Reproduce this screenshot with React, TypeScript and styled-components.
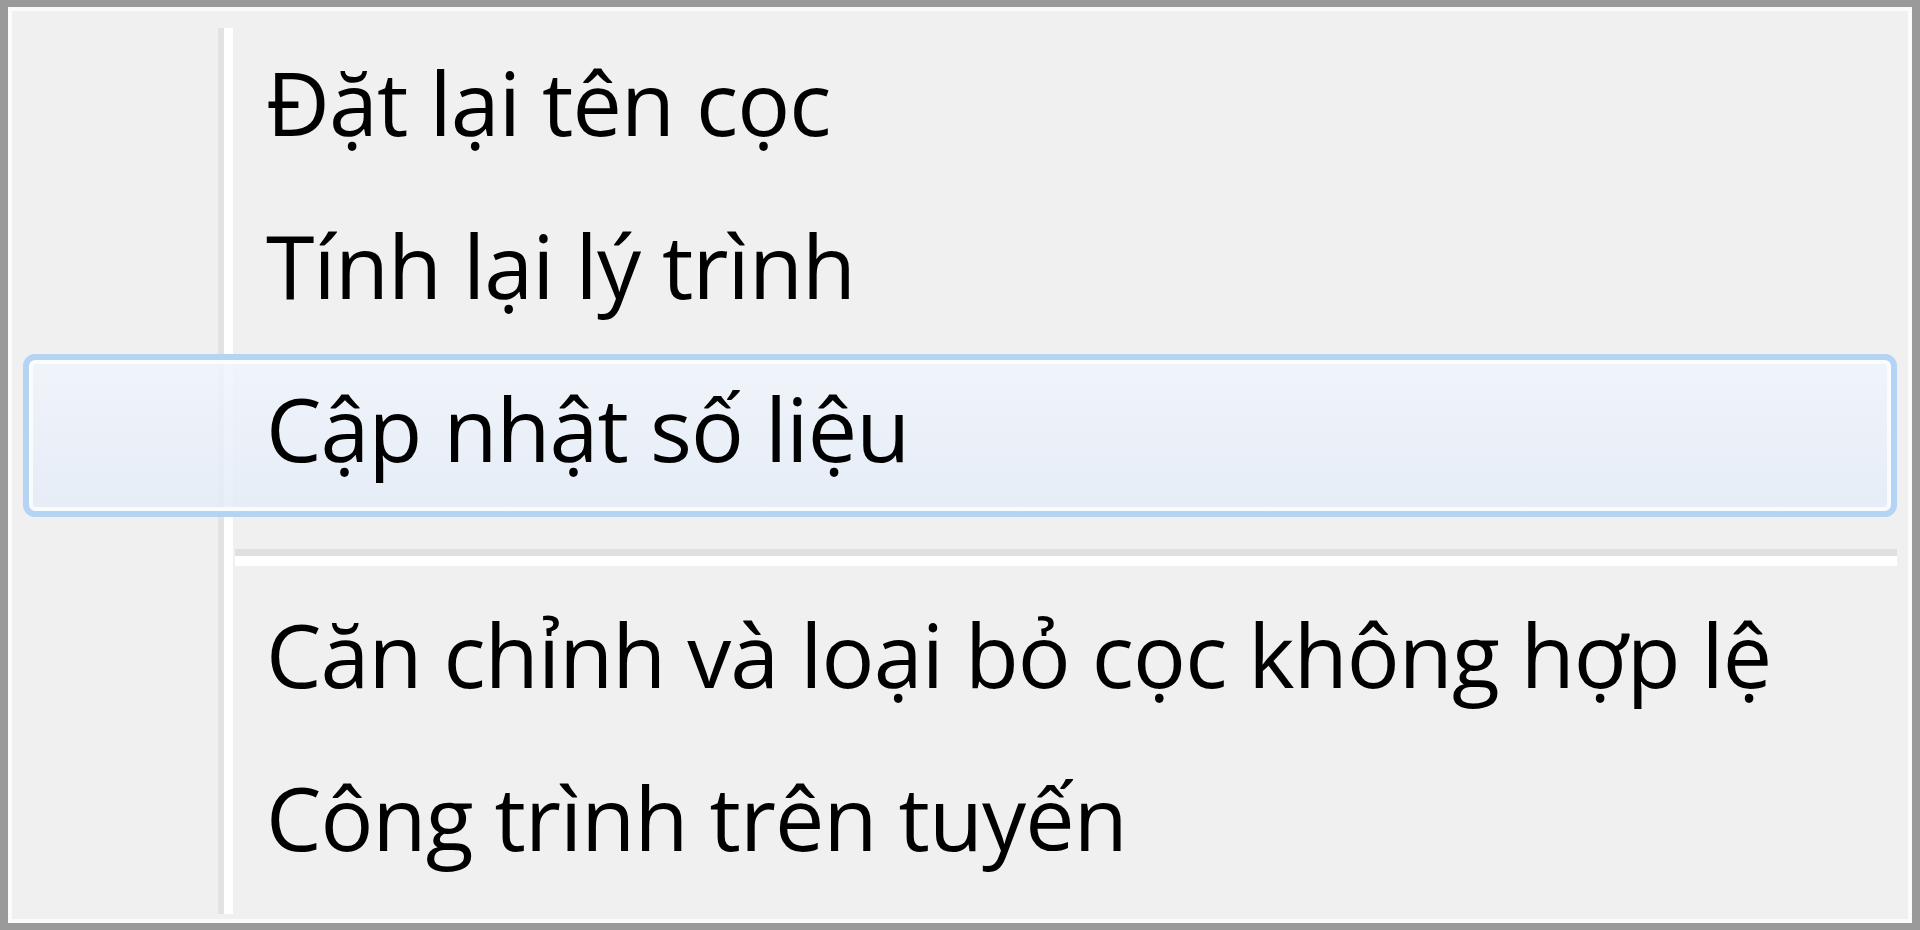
import React from "react";
import styled, { createGlobalStyle } from "styled-components";

const Global = createGlobalStyle`
  html, body { margin: 0; padding: 0; background: #f0f0f0; }
  #root { width: 1920px; height: 930px; }
`;

const Menu = styled.div`
  box-sizing: border-box;
  width: 1920px;
  height: 930px;
  border-style: solid;
  border-color: #9a9a9a;
  border-width: 7px 8px 7px 8px;
  box-shadow: inset 0 0 0 4px #fbfbfb;
  background: #f0f0f0;
  padding: 21px 15px 9px 15px;
  font-family: "Open Sans", "Noto Sans", "Liberation Sans", sans-serif;
`;

const Panel = styled.div`
  height: 100%;
  display: flex;
  flex-direction: column;
  background-image: linear-gradient(
    to right,
    transparent 195px,
    #e2e3e3 195px,
    #e2e3e3 201px,
    #ffffff 201px,
    #ffffff 210px,
    transparent 210px
  );
  background-repeat: no-repeat;
  background-position: 0 -5px;
  background-size: 100% calc(100% + 9px);
`;

const Item = styled.div<{ $active?: boolean }>`
  box-sizing: border-box;
  flex: none;
  height: 163px;
  display: flex;
  align-items: center;
  padding-left: 237px;
  padding-bottom: 16px;
  border-radius: 12px;
  font-size: 88px;
  font-weight: 500;
  letter-spacing: -0.9px;
  color: #000;
  white-space: nowrap;
  border: 6px solid ${(p) => (p.$active ? "#b4d3f5" : "transparent")};
  box-shadow: ${(p) => (p.$active ? "inset 0 0 0 4px rgba(255,255,255,0.75)" : "none")};
  background: ${(p) =>
    p.$active
      ? "linear-gradient(to bottom, rgba(240,245,252,0.85), rgba(228,236,248,0.85))"
      : "transparent"};
`;

const Separator = styled.div`
  flex: none;
  height: 63px;
  display: flex;
  flex-direction: column;
  justify-content: flex-end;
  padding-left: 212px;
  padding-bottom: 14px;
  box-sizing: border-box;
  &::after {
    content: "";
    display: block;
    height: 17px;
    background: linear-gradient(to bottom, #e0e0e0 0, #e0e0e0 7px, #ffffff 7px, #ffffff 17px);
  }
`;

export default function App() {
  return (
    <>
      <Global />
      <Menu>
        <Panel>
          <Item>Đặt lại tên cọc</Item>
          <Item>Tính lại lý trình</Item>
          <Item $active>Cập nhật số liệu</Item>
          <Separator />
          <Item>Căn chỉnh và loại bỏ cọc không hợp lệ</Item>
          <Item>Công trình trên tuyến</Item>
        </Panel>
      </Menu>
    </>
  );
}
